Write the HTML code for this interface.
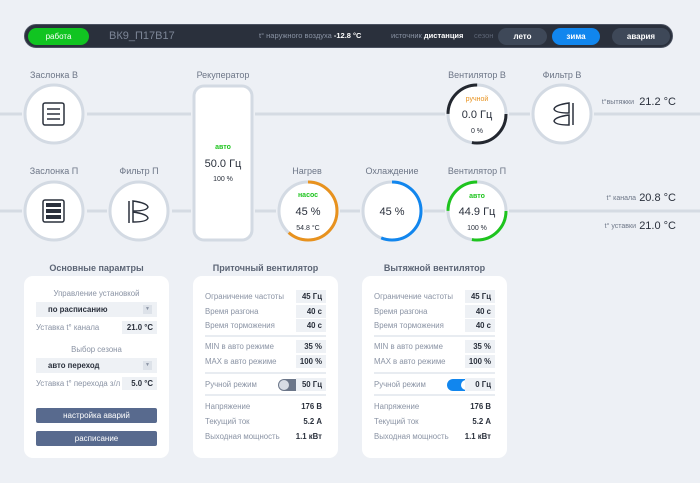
<!DOCTYPE html>
<html><head><meta charset="utf-8"><style>
*{margin:0;padding:0;box-sizing:border-box}
body{width:700px;height:483px;background:#edf0f5;font-family:"Liberation Sans",sans-serif;position:relative;overflow:hidden}
.a{position:absolute}
.bar{left:24px;top:24px;width:649px;height:24px;background:#2a303c;border-radius:12px;border:1px solid #4a5160}
.pill{position:absolute;height:17px;border-radius:9px;font-size:8px;font-weight:bold;color:#fff;text-align:center;line-height:17px}
.panel{position:absolute;top:276px;width:145px;height:182px;background:#fff;border-radius:9px}
.ttl{position:absolute;top:263px;font-size:9px;color:#5c6575;text-align:center;width:145px;font-weight:bold}
.row{position:absolute;left:12px;right:12px;height:13px;font-size:7.8px;color:#8a93a4;line-height:13px;white-space:nowrap}
.row b{position:absolute;right:0;top:0;height:13px;width:30px;background:#eef1f5;color:#2a303c;text-align:right;padding-right:4px;font-size:7.8px;white-space:nowrap}
.row b.n{background:none;width:auto}
.sep{position:absolute;left:12px;right:12px;height:2px;background:#e8ecf1}
.sel{position:absolute;left:12px;right:12px;height:15px;background:#eef1f5;font-size:7.8px;font-weight:bold;color:#2a303c;line-height:15px;padding-left:12px}
.sel i{position:absolute;right:5px;top:3px;width:9px;height:9px;background:#dde2e9;font-style:normal;font-size:5px;color:#8a93a4;text-align:center;line-height:9px}
.btn{position:absolute;left:12px;right:12px;height:15px;background:#586a8e;border-radius:2px;color:#fff;font-size:8px;text-align:center;line-height:15px}
.tg{position:absolute;left:73px;top:1px;width:25px;height:12px;border-radius:6px}
.tg span{position:absolute;top:1px;width:10px;height:10px;border-radius:5px;background:#fff}
</style></head><body>
<div class="a bar">
<div class="pill" style="left:3px;top:3px;width:61px;background:#11c421;font-weight:normal">работа</div>
<div class="a" style="left:84px;top:5px;font-size:11px;color:#7d8697">ВК9_П17В17</div>
<div class="a" style="left:234px;top:6px;font-size:7.5px;color:#8a93a4">t° наружного воздуха <b style="color:#fff">-12.8 °C</b></div>
<div class="a" style="left:366px;top:6px;font-size:7.5px;color:#8a93a4">источник <b style="color:#fff">дистанция</b></div>
<div class="a" style="left:449px;top:6px;font-size:7.5px;color:#5d6575">сезон</div>
<div class="pill" style="left:473px;top:3px;width:49px;background:#3e4858">лето</div>
<div class="pill" style="left:527px;top:3px;width:48px;background:#1186ee">зима</div>
<div class="pill" style="left:587px;top:3px;width:58px;background:#3e4858">авария</div>
</div>
<svg class="a" style="left:0;top:0" width="700" height="260">
<g stroke="#d5dbe3" stroke-width="3">
<line x1="0" y1="114" x2="22" y2="114"/><line x1="87" y1="114" x2="191" y2="114"/><line x1="255" y1="114" x2="445" y2="114"/><line x1="509" y1="114" x2="530" y2="114"/><line x1="594" y1="114" x2="700" y2="114"/>
<line x1="0" y1="211" x2="22" y2="211"/><line x1="87" y1="211" x2="107" y2="211"/><line x1="172" y1="211" x2="191" y2="211"/><line x1="255" y1="211" x2="276" y2="211"/><line x1="340" y1="211" x2="360" y2="211"/><line x1="424" y1="211" x2="445" y2="211"/><line x1="509" y1="211" x2="700" y2="211"/>
</g>
<g fill="#fff" stroke="#d3dae3" stroke-width="3">
<circle cx="54" cy="114" r="29"/><circle cx="477" cy="114" r="29"/><circle cx="562" cy="114" r="29"/>
<circle cx="54" cy="211" r="29"/><circle cx="139" cy="211" r="29"/><circle cx="308" cy="211" r="29"/><circle cx="392" cy="211" r="29"/><circle cx="477" cy="211" r="29"/>
<rect x="194" y="86" width="58" height="154" rx="10"/>
</g>
<g fill="none" stroke-width="3">
<circle cx="477" cy="114" r="29" stroke="#23272f" stroke-dasharray="50.6 40.5 45.5 50"/>
<circle cx="477" cy="211" r="29" stroke="#1ec41e" stroke-dasharray="50.6 40.5 45.5 50"/>
<circle cx="308" cy="211" r="29" stroke="#e8921e" stroke-dasharray="112 70" transform="rotate(-90 308 211)"/>
<circle cx="392" cy="211" r="29" stroke="#1186ee" stroke-dasharray="102 80" transform="rotate(-90 392 211)"/>
</g>
<g fill="none" stroke="#2a303c" stroke-width="1.5">
<rect x="43" y="103" width="21" height="22" rx="2"/><line x1="47" y1="109" x2="60" y2="109"/><line x1="47" y1="114" x2="60" y2="114"/><line x1="47" y1="119" x2="60" y2="119"/>
<rect x="43" y="200" width="21" height="22" rx="2"/>
<line x1="129" y1="201" x2="129" y2="223"/><path d="M133 201 Q147 203 148 207 Q147 211 133 211 Z M133 212 Q147 214 148 218 Q147 222 133 222 Z"/>
<line x1="573" y1="103" x2="573" y2="125"/><path d="M569 103 Q555 105 554 109 Q555 113 569 113 Z M569 115 Q555 117 554 121 Q555 125 569 125 Z"/>
</g>
<g fill="#2a303c"><rect x="46" y="203" width="15" height="4"/><rect x="46" y="209" width="15" height="4"/><rect x="46" y="215" width="15" height="4"/></g>
<g font-family="Liberation Sans" text-anchor="middle">
<text x="223" y="149" font-size="7" font-weight="bold" fill="#1ec41e">авто</text>
<text x="223" y="167" font-size="11" fill="#2a303c">50.0 Гц</text>
<text x="223" y="181" font-size="7" fill="#2a303c">100 %</text>
<text x="477" y="101" font-size="7" fill="#e8921e">ручной</text>
<text x="477" y="118" font-size="11" fill="#2a303c">0.0 Гц</text>
<text x="477" y="133" font-size="7" fill="#2a303c">0 %</text>
<text x="477" y="198" font-size="7" font-weight="bold" fill="#1ec41e">авто</text>
<text x="477" y="215" font-size="11" fill="#2a303c">44.9 Гц</text>
<text x="477" y="230" font-size="7" fill="#2a303c">100 %</text>
<text x="308" y="197" font-size="7" font-weight="bold" fill="#1ec41e">насос</text>
<text x="308" y="215" font-size="11" fill="#2a303c">45 %</text>
<text x="308" y="230" font-size="7" fill="#2a303c">54.8 °C</text>
<text x="392" y="215" font-size="11" fill="#2a303c">45 %</text>
</g>
<g font-family="Liberation Sans" font-size="9" fill="#6d7687" text-anchor="middle">
<text x="54" y="78">Заслонка В</text><text x="223" y="78">Рекуператор</text><text x="477" y="78">Вентилятор В</text><text x="562" y="78">Фильтр В</text>
<text x="54" y="174">Заслонка П</text><text x="139" y="174">Фильтр П</text><text x="307" y="174">Нагрев</text><text x="392" y="174">Охлаждение</text><text x="477" y="174">Вентилятор П</text>
</g>
<g font-family="Liberation Sans" fill="#2a303c" text-anchor="end">
<text x="634" y="104" font-size="7" fill="#6d7687">t°вытяжки</text><text x="676" y="105" font-size="11">21.2 °C</text>
<text x="636" y="200" font-size="7" fill="#6d7687">t° канала</text><text x="676" y="201" font-size="11">20.8 °C</text>
<text x="636" y="228" font-size="7" fill="#6d7687">t° уставки</text><text x="676" y="229" font-size="11">21.0 °C</text>
</g>
</svg>

<div class="ttl" style="left:24px">Основные парамтры</div>
<div class="panel" style="left:24px">
<div class="a" style="left:0;width:145px;top:13px;text-align:center;font-size:7.8px;color:#8a93a4">Управление установкой</div>
<div class="sel" style="top:26px">по расписанию<i>▼</i></div>
<div class="row" style="top:45px">Уставка t° канала<b style="width:35px">21.0 °C</b></div>
<div class="a" style="left:0;width:145px;top:69px;text-align:center;font-size:7.8px;color:#8a93a4">Выбор сезона</div>
<div class="sel" style="top:82px">авто переход<i>▼</i></div>
<div class="row" style="top:101px">Уставка t° перехода з/л<b style="width:35px">5.0 °C</b></div>
<div class="btn" style="top:132px">настройка аварий</div>
<div class="btn" style="top:155px">расписание</div>
</div>

<div class="ttl" style="left:193px">Приточный вентилятор</div>
<div class="panel" style="left:193px">
<div class="row" style="top:14px">Ограничение частоты<b>45 Гц</b></div>
<div class="row" style="top:29px">Время разгона<b>40 с</b></div>
<div class="row" style="top:43px">Время торможения<b>40 с</b></div>
<div class="sep" style="top:59px"></div>
<div class="row" style="top:64px">MIN в авто режиме<b>35 %</b></div>
<div class="row" style="top:79px">MAX в авто режиме<b>100 %</b></div>
<div class="sep" style="top:96px"></div>
<div class="row" style="top:102px">Ручной режим<div class="tg" style="background:#6b7689"><span style="left:1px;background:#d7dce4"></span></div><b>50 Гц</b></div>
<div class="sep" style="top:118px"></div>
<div class="row" style="top:124px">Напряжение<b class="n">176 В</b></div>
<div class="row" style="top:139px">Текущий ток<b class="n">5.2 А</b></div>
<div class="row" style="top:154px">Выходная мощность<b class="n">1.1 кВт</b></div>
</div>

<div class="ttl" style="left:362px">Вытяжной вентилятор</div>
<div class="panel" style="left:362px">
<div class="row" style="top:14px">Ограничение частоты<b>45 Гц</b></div>
<div class="row" style="top:29px">Время разгона<b>40 с</b></div>
<div class="row" style="top:43px">Время торможения<b>40 с</b></div>
<div class="sep" style="top:59px"></div>
<div class="row" style="top:64px">MIN в авто режиме<b>35 %</b></div>
<div class="row" style="top:79px">MAX в авто режиме<b>100 %</b></div>
<div class="sep" style="top:96px"></div>
<div class="row" style="top:102px">Ручной режим<div class="tg" style="background:#1186ee"><span style="right:1px"></span></div><b>0 Гц</b></div>
<div class="sep" style="top:118px"></div>
<div class="row" style="top:124px">Напряжение<b class="n">176 В</b></div>
<div class="row" style="top:139px">Текущий ток<b class="n">5.2 А</b></div>
<div class="row" style="top:154px">Выходная мощность<b class="n">1.1 кВт</b></div>
</div>
</body></html>
